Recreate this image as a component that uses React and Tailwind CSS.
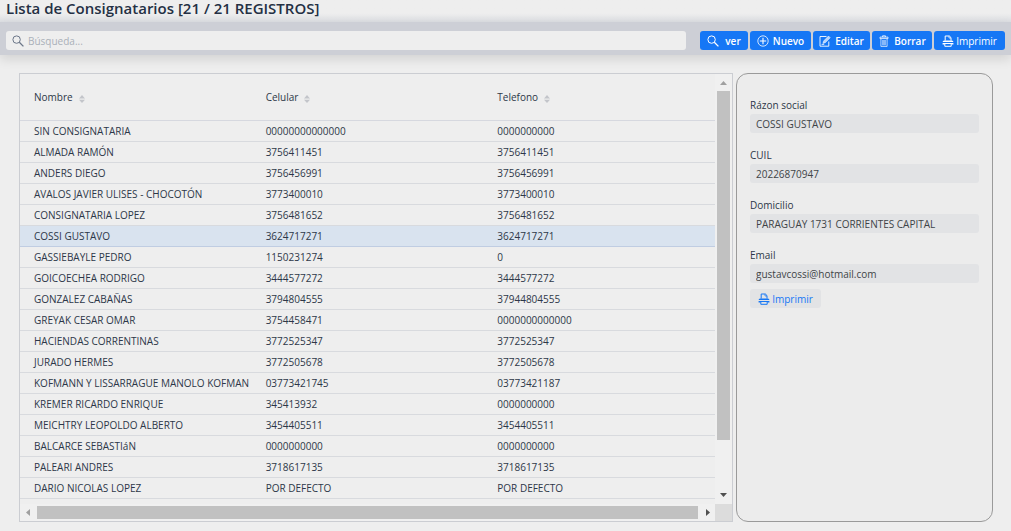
import React, { useState } from "react";

const rows = [
  ["SIN CONSIGNATARIA", "00000000000000", "0000000000"],
  ["ALMADA RAMÓN", "3756411451", "3756411451"],
  ["ANDERS DIEGO", "3756456991", "3756456991"],
  ["AVALOS JAVIER ULISES - CHOCOTÓN", "3773400010", "3773400010"],
  ["CONSIGNATARIA LOPEZ", "3756481652", "3756481652"],
  ["COSSI GUSTAVO", "3624717271", "3624717271"],
  ["GASSIEBAYLE PEDRO", "1150231274", "0"],
  ["GOICOECHEA RODRIGO", "3444577272", "3444577272"],
  ["GONZALEZ CABAÑAS", "3794804555", "37944804555"],
  ["GREYAK CESAR OMAR", "3754458471", "0000000000000"],
  ["HACIENDAS CORRENTINAS", "3772525347", "3772525347"],
  ["JURADO HERMES", "3772505678", "3772505678"],
  ["KOFMANN Y LISSARRAGUE MANOLO KOFMAN", "03773421745", "03773421187"],
  ["KREMER RICARDO ENRIQUE", "345413932", "0000000000"],
  ["MEICHTRY LEOPOLDO ALBERTO", "3454405511", "3454405511"],
  ["BALCARCE SEBASTIáN", "0000000000", "0000000000"],
  ["PALEARI ANDRES", "3718617135", "3718617135"],
  ["DARIO NICOLAS LOPEZ", "POR DEFECTO", "POR DEFECTO"],
];

const fields = [
  ["razon", "Rázon social", "COSSI GUSTAVO"],
  ["cuil", "CUIL", "20226870947"],
  ["domicilio", "Domicilio", "PARAGUAY 1731 CORRIENTES CAPITAL"],
  ["email", "Email", "gustavcossi@hotmail.com"],
];

function Icon({ className = "size-3", children }) {
  return (
    <svg
      viewBox="0 0 12 12"
      className={`${className} shrink-0`}
      fill="none"
      stroke="currentColor"
      aria-hidden="true"
    >
      {children}
    </svg>
  );
}

function SearchIcon() {
  return (
    <Icon>
      <circle cx="4.6" cy="4.6" r="3.7" strokeWidth="1" />
      <path d="M7.3 7.3 11.4 11.4" strokeWidth="1.3" />
    </Icon>
  );
}

function PlusIcon() {
  return (
    <Icon>
      <circle cx="6" cy="6" r="5.2" strokeWidth="0.8" />
      <path d="M6 2.8V9.2M2.8 6H9.2" strokeWidth="1.1" />
    </Icon>
  );
}

function EditIcon() {
  return (
    <Icon>
      <path d="M7.5 1.5H1V11.2H9.8V6.5" strokeWidth="0.9" />
      <path d="M4.6 6 9.5 1 11.2 2.7 6.3 7.7 3.9 8.4Z" fill="currentColor" fillOpacity="0.7" strokeWidth="0.5" />
      <path d="M2.6 9.4H5.2" strokeWidth="0.8" />
    </Icon>
  );
}

function TrashIcon() {
  return (
    <Icon>
      <path d="M4.5 1.8V0.9H7.5V1.8" strokeWidth="0.9" />
      <path d="M2 2.1H10V3.6H2Z" strokeWidth="0.8" />
      <path d="M2.9 4V11.4H9.1V4M4.8 5V10.3M6 5V10.3M7.2 5V10.3" strokeWidth="0.7" />
    </Icon>
  );
}

function PrintIcon() {
  return (
    <Icon>
      <path d="M3.2 5.6V1H7.4L9 2.6V5.6" strokeWidth="1" />
      <path d="M7 1V3H9" strokeWidth="0.7" />
      <path d="M0.6 6.9Q0.6 5.4 2.1 5.4H9.9Q11.4 5.4 11.4 6.9V7.1H0.6Z" fill="currentColor" stroke="none" />
      <path d="M0.6 8H11.4V9.4H9.6V8.9H2.4V9.4H0.6Z" fill="currentColor" stroke="none" />
      <path d="M2.8 8.8V11.3H9.2V8.8" strokeWidth="1" />
    </Icon>
  );
}

function ToolButton({ icon, children, className }) {
  return (
    <button
      type="button"
      className={`flex h-[19px] items-center justify-center rounded-[3px] bg-[#1677f5] text-white ${className}`}
    >
      {icon}
      {children}
    </button>
  );
}

function SortMark() {
  return (
    <svg viewBox="0 0 6 8" className="mt-1 h-2 w-1.5 fill-[#c3c5ca]" aria-hidden="true">
      <path d="M0 3.4 3 0 6 3.4ZM0 4.8H6L3 8Z" />
    </svg>
  );
}

function ScrollArrow({ d, className }) {
  return (
    <svg viewBox="0 0 17 17" className={`size-[17px] shrink-0 ${className}`} aria-hidden="true">
      <path d={d} />
    </svg>
  );
}

export default function App() {
  const [selected, setSelected] = useState(5);
  return (
    <div className="flex min-h-screen flex-col bg-[#eeeeee] font-['Open_Sans','Noto_Sans',sans-serif] text-[10px] leading-[14px] text-[#2d3748]">
      <h1 className="h-[22px] bg-linear-to-b from-[#eeeeee] from-60% to-[#dddfe3] px-1.5 text-[15px] leading-[17px] font-semibold text-[#243044]">
        Lista de Consignatarios [21 / 21 REGISTROS]
      </h1>

      <header className="flex items-center gap-3.5 bg-[#cdcfd6] px-1.5 pt-[9px] pb-[5px] shadow-[0_4px_12px_rgba(0,0,0,0.12)]">
        <label className="flex h-[19px] min-w-0 flex-1 items-center gap-1 rounded-[3px] bg-[#eeeeee] px-1.5 text-[#6b7688]">
          <SearchIcon />
          <input
            type="search"
            aria-label="Búsqueda"
            placeholder="Búsqueda..."
            className="min-w-0 flex-1 bg-transparent outline-none placeholder:text-[#aab0b9]"
          />
        </label>
        <div className="flex gap-0.5">
          <ToolButton icon={<SearchIcon />} className="w-12 gap-1.5 font-semibold">ver</ToolButton>
          <ToolButton icon={<PlusIcon />} className="w-[61px] gap-1 font-semibold">Nuevo</ToolButton>
          <ToolButton icon={<EditIcon />} className="w-[57px] gap-1 font-semibold">Editar</ToolButton>
          <ToolButton icon={<TrashIcon />} className="w-[60px] gap-1 font-semibold">Borrar</ToolButton>
          <ToolButton icon={<PrintIcon />} className="w-[71px] gap-0.5 font-medium">Imprimir</ToolButton>
        </div>
      </header>

      <main className="flex flex-1 gap-[3px] pt-[18px] pr-[18px] pb-[9px] pl-[19px]">
        <section className="flex min-w-0 flex-1 flex-col border border-[#cbcdd2]">
          <div className="flex flex-1">
            <div className="min-w-0 flex-1">
              <table className="w-full table-fixed border-collapse text-left">
                <thead>
                  <tr className="h-[46px] border-b border-[#d6d8df]">
                    {["Nombre", "Celular", "Telefono"].map((name) => (
                      <th key={name} className="px-3.5 py-0 font-medium">
                        <button type="button" className="flex items-center gap-1.5">
                          {name}
                          <SortMark />
                        </button>
                      </th>
                    ))}
                  </tr>
                </thead>
                <tbody>
                  {rows.map((row, i) => (
                    <tr
                      key={row[0]}
                      onClick={() => setSelected(i)}
                      className={
                        i === selected
                          ? "h-[21px] border-b border-[#c0cde2] bg-[#d9e3ef]"
                          : "h-[21px] border-b border-[#d8dade]"
                      }
                    >
                      {row.map((cell, j) => (
                        <td key={j} className="p-0 pl-3.5 leading-[12px] whitespace-nowrap">{cell}</td>
                      ))}
                    </tr>
                  ))}
                </tbody>
              </table>
            </div>
            <div className="flex w-[17px] flex-col bg-[#f0f0f0]">
              <ScrollArrow d="M5 11 8.5 7 12 11Z" className="fill-[#a0a0a0]" />
              <div className="mx-0.5 flex-[15] bg-[#c1c1c1]" />
              <div className="flex-[2]" />
              <ScrollArrow d="M5 6H12L8.5 10Z" className="fill-[#505050]" />
            </div>
          </div>
          <div className="flex h-[17px] bg-[#f0f0f0]">
            <ScrollArrow d="M10 5V12L6 8.5Z" className="fill-[#a0a0a0]" />
            <div className="my-0.5 flex-1 bg-[#c1c1c1]" />
            <ScrollArrow d="M8 5V12L12 8.5Z" className="fill-[#505050]" />
            <div className="w-[17px] bg-[#dcdcdc]" />
          </div>
        </section>

        <aside className="w-[257px] rounded-xl border border-[#9a9a9a] bg-[#ececec] px-[13px] pt-6">
          <form className="flex flex-col gap-[15px]" onSubmit={(e) => e.preventDefault()}>
            {fields.map(([id, label, value]) => (
              <div key={id} className="flex flex-col">
                <label htmlFor={id} className="pb-0.5">{label}</label>
                <input
                  id={id}
                  readOnly
                  defaultValue={value}
                  className="h-[19px] w-full rounded-[3px] bg-[#e2e3e5] px-1.5 text-[#404347] outline-none"
                />
              </div>
            ))}
          </form>
          <button
            type="button"
            className="mt-1.5 flex h-[19px] w-[71px] items-center justify-center gap-0.5 rounded-[3px] bg-[#e2e3e5] font-medium text-[#1677f5]"
          >
            <PrintIcon />
            Imprimir
          </button>
        </aside>
      </main>
    </div>
  );
}
